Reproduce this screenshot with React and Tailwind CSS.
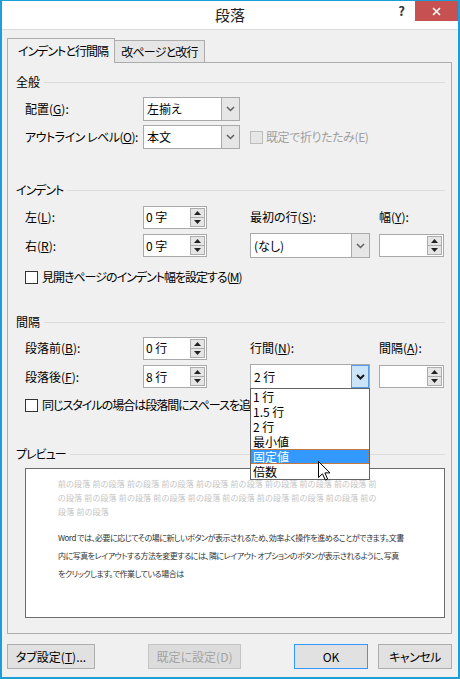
import React from 'react';

const FONT = "font-['Noto_Sans_CJK_JP','Noto_Sans',sans-serif] [font-feature-settings:'palt']";

const Chevron = ({ dark }) => (
  <svg width="9" height="6" viewBox="0 0 9 6">
    <polyline points="1,1 4.5,4.5 8,1" fill="none" stroke={dark ? '#1a1a1a' : '#606060'} strokeWidth={dark ? 2 : 1.5} />
  </svg>
);

const Combo = ({ value, open, className }) => (
  <div className={`flex bg-white border border-[#a9a9a9] ${className}`}>
    <div className="flex-1 flex items-center pl-[3px]">{value}</div>
    {open ? (
      <div className="w-[18px] flex items-center justify-center border border-[#569de5] bg-[#cce4f7]">
        <Chevron dark />
      </div>
    ) : (
      <div className="w-[18px] flex items-center justify-center border-l border-[#a9a9a9] bg-[#e6e6e6]">
        <Chevron />
      </div>
    )}
  </div>
);

const Arrow = ({ down }) => (
  <svg width="7" height="4" viewBox="0 0 7 4">
    <polygon points={down ? '0,0 7,0 3.5,4' : '0,4 7,4 3.5,0'} fill="#222" />
  </svg>
);

const Spin = ({ value, className }) => (
  <div className={`flex h-[23px] bg-white border border-[#a9a9a9] ${className}`}>
    <div className="flex-1 flex items-center pl-[2px]">{value}</div>
    <div className="flex flex-col w-[15px] my-px mr-px">
      <div className="flex-1 flex items-center justify-center border border-[#acacac] bg-[#e5e5e5]">
        <Arrow />
      </div>
      <div className="flex-1 flex items-center justify-center border border-t-0 border-[#acacac] bg-[#e5e5e5]">
        <Arrow down />
      </div>
    </div>
  </div>
);

const Header = ({ title, className, tight }) => (
  <div className={`flex items-center h-[16px] pl-[8px] pr-[6px] ${className}`}>
    <span className={tight ? 'tracking-[-1px]' : ''}>{title}</span>
    <div className="flex-1 h-px bg-[#dcdcdc] ml-[4px]" />
  </div>
);

const Row = ({ children, className }) => (
  <div className={`grid grid-cols-[118px_107px_129px_65px] items-center pl-[17px] ${className}`}>
    {children}
  </div>
);

const Check = ({ label, className }) => (
  <div className={`flex items-center gap-[4px] pl-[17px] h-[16px] whitespace-nowrap ${className}`}>
    <div className="shrink-0 w-[13px] h-[13px] border border-[#333] bg-white" />
    <span className="tracking-[-1px]">{label}</span>
  </div>
);

const grayLines = [
  '前の段落 前の段落 前の段落 前の段落 前の段落 前の段落 前の段落 前の段落 前の段落 前',
  'の段落 前の段落 前の段落 前の段落 前の段落 前の段落 前の段落 前の段落 前の段落 前の',
  '段落 前の段落',
];

const bodyLines = [
  'Word では、必要に応じてその場に新しいボタンが表示されるため、効率よく操作を進めることができます。文書',
  '内に写真をレイアウトする方法を変更するには、隣にレイアウト オプションのボタンが表示されるように、写真',
  'をクリックします。で作業している場合は',
];

const spacingOptions = ['1 行', '1.5 行', '2 行', '最小値', '固定値', '倍数'];

export default function App() {
  return (
    <div className={`w-[460px] h-[679px] flex flex-col bg-[#f0f0f0] border-2 border-t border-[#1c9fd9] text-black text-[12px] leading-[16px] ${FONT}`}>
      {/* title bar */}
      <div className="grid grid-cols-[1fr_auto_1fr] h-[29px] bg-white border-b border-[#dadada]">
        <div />
        <div className="flex items-center text-[15px] text-[#222]">段落</div>
        <div className="flex justify-end items-start">
          <span className="h-[20px] flex items-center mr-[10px] text-[13px] font-bold text-[#333]">?</span>
          <div className="w-[43px] h-[20px] bg-[#c75050] flex items-center justify-center">
            <svg width="9" height="9" viewBox="0 0 9 9">
              <path d="M1 1 L8 8 M8 1 L1 8" stroke="#fff" strokeWidth="1.6" />
            </svg>
          </div>
        </div>
      </div>

      <div className="flex flex-col px-[5px] pt-[8px]">
        {/* tabs */}
        <div className="flex items-end h-[25px]">
          <div className="relative z-10 h-[25px] flex items-center pl-[10px] w-[108px] border border-b-0 border-[#acacac] bg-[#f0f0f0] whitespace-nowrap tracking-[-1px]">
            インデントと行間隔
          </div>
          <div className="h-[23px] flex items-center justify-center w-[90px] border border-l-0 border-[#acacac] bg-[#e6e6e6] whitespace-nowrap tracking-[-0.8px]">
            改ページと改行
          </div>
        </div>

        <div className="relative -mt-px w-[445px] h-[572px] border border-[#acacac] flex flex-col">
          <Header title="全般" className="mt-[11px]" />
          <Row className="mt-[7px] h-[24px]">
            <span>配置(<u>G</u>):</span>
            <Combo value="左揃え" className="w-[97px] h-[24px]" />
          </Row>
          <Row className="mt-[4px] h-[24px]">
            <span className="whitespace-nowrap tracking-[-0.5px]">アウトライン レベル(<u>O</u>):</span>
            <Combo value="本文" className="w-[97px] h-[24px]" />
            <div className="flex items-center gap-[3px] whitespace-nowrap text-[#a0a0a0] col-span-2">
              <div className="w-[13px] h-[13px] border border-[#bcbcbc] bg-[#e6e6e6]" />
              <span className="tracking-[-0.4px]">既定で折りたたみ(E)</span>
            </div>
          </Row>

          <Header title="インデント" tight className="mt-[33px]" />
          <Row className="mt-[7px] h-[24px]">
            <span>左(<u>L</u>):</span>
            <Spin value="0 字" className="w-[64px]" />
            <span>最初の行(<u>S</u>):</span>
            <span>幅(<u>Y</u>):</span>
          </Row>
          <Row className="mt-[4px] h-[25px]">
            <span>右(<u>R</u>):</span>
            <Spin value="0 字" className="w-[64px]" />
            <Combo value="(なし)" className="w-[120px] h-[25px]" />
            <Spin value="" className="w-[65px]" />
          </Row>
          <Check label={<>見開きページのインデント幅を設定する(<u>M</u>)</>} className="mt-[11px]" />

          <Header title="間隔" className="mt-[29px]" />
          <Row className="mt-[6px] h-[24px]">
            <span>段落前(<u>B</u>):</span>
            <Spin value="0 行" className="w-[64px]" />
            <span>行間(<u>N</u>):</span>
            <span>間隔(<u>A</u>):</span>
          </Row>
          <Row className="mt-[4px] h-[25px]">
            <span>段落後(<u>F</u>):</span>
            <Spin value="8 行" className="w-[64px]" />
            <Combo value="2 行" open className="w-[120px] h-[25px]" />
            <Spin value="" className="w-[65px]" />
          </Row>
          {/* label runs on under the open list, so it is cut at the list's edge */}
          <Check label={<>同じスタイルの場合は段落間にスペースを追加しない(<u>C</u>)</>} className="mt-[8px] w-[242px] overflow-hidden" />

          <Header title="プレビュー" tight className="mt-[33px]" />
          <div className="ml-[17px] mt-[6px] w-[420px] h-[150px] border border-[#6d6d6d] bg-white pt-[8px] pl-[32px]">
            <div className="text-[8px] leading-[14px] text-[#c4c4c4] tracking-[0.2px]">
              {grayLines.map((l) => (
                <div key={l} className="whitespace-nowrap">{l}</div>
              ))}
            </div>
            <div className="mt-[10px] text-[8px] leading-[18px] text-[#333] tracking-[-0.5px]">
              {bodyLines.map((l) => (
                <div key={l} className="whitespace-nowrap">{l}</div>
              ))}
            </div>
          </div>

          {/* open line-spacing list */}
          <div className="absolute left-[242px] top-[325px] w-[120px] h-[92px] border border-[#646464] bg-white z-20 flex flex-col">
            {spacingOptions.map((o) => (
              <div
                key={o}
                className={
                  o === '固定値'
                    ? 'h-[15px] flex items-center pl-[2px] bg-[#3399ff] text-white outline-1 outline-dotted outline-[#c8783c] -outline-offset-1'
                    : 'h-[15px] flex items-center pl-[2px]'
                }
              >
                {o}
              </div>
            ))}
          </div>

          {/* mouse pointer */}
          <svg className="absolute left-[310px] top-[398px] z-30" width="13" height="20" viewBox="0 0 13 20">
            <path d="M0.5 0.5 L0.5 16.5 L4.5 12.8 L7.3 19 L9.6 18 L6.9 11.9 L12 11.9 Z" fill="#fff" stroke="#000" strokeWidth="1" />
          </svg>
        </div>

        {/* dialog buttons */}
        <div className="flex mt-[10px] h-[25px]">
          <div className="w-[88px] flex items-center justify-center border border-[#adadad] bg-[#e1e1e1] whitespace-nowrap">
            タブ設定(<u>T</u>)...
          </div>
          <div className="ml-[53px] w-[93px] flex items-center justify-center border border-[#c4c4c4] bg-[#dcdcdc] text-[#a3a3a3] whitespace-nowrap">
            既定に設定(D)
          </div>
          <div className="ml-[53px] w-[74px] flex items-center justify-center border border-[#3399ff] bg-[#e1e1e1]">
            OK
          </div>
          <div className="ml-[10px] w-[74px] flex items-center justify-center border border-[#adadad] bg-[#e1e1e1] whitespace-nowrap tracking-[-0.5px]">
            キャンセル
          </div>
        </div>
      </div>
    </div>
  );
}
